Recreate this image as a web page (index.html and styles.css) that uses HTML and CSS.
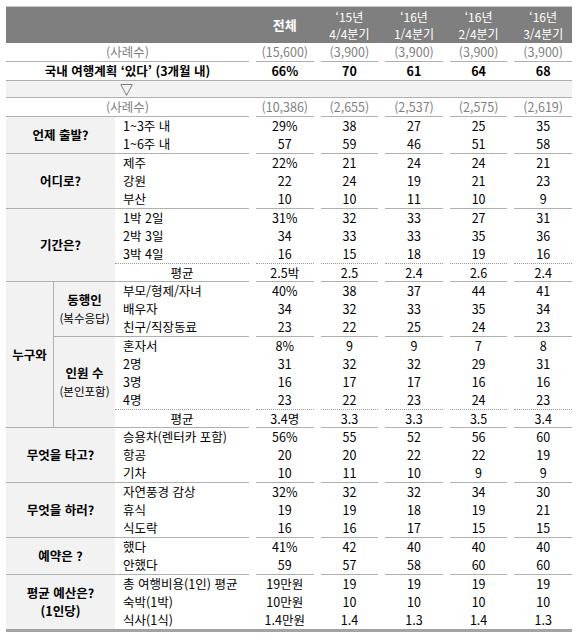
FILE: index.html
```html
<!DOCTYPE html>
<html lang="ko">
<head>
<meta charset="utf-8">
<link rel="stylesheet" href="styles.css">
</head>
<body>
<div class="tbl">
  <div class="hd lbl"></div>
  <div class="hd hv strong">전체</div>
  <div class="hd hv"><span>‘15년</span><span>4/4분기</span></div>
  <div class="hd hv"><span>‘16년</span><span>1/4분기</span></div>
  <div class="hd hv"><span>‘16년</span><span>2/4분기</span></div>
  <div class="hd hv"><span>‘16년</span><span>3/4분기</span></div>

  <div class="lbl grey e">(사례수)</div>
  <div class="v grey e">(15,600)</div>
  <div class="v grey e">(3,900)</div>
  <div class="v grey e">(3,900)</div>
  <div class="v grey e">(3,900)</div>
  <div class="v grey e">(3,900)</div>

  <div class="lbl strong">국내 여행계획 ‘있다’ (3개월 내)</div>
  <div class="v strong">66%</div>
  <div class="v strong">70</div>
  <div class="v strong">61</div>
  <div class="v strong">64</div>
  <div class="v strong">68</div>

  <div class="arrow">▽</div>

  <div class="lbl grey e">(사례수)</div>
  <div class="v grey e">(10,386)</div>
  <div class="v grey e">(2,655)</div>
  <div class="v grey e">(2,537)</div>
  <div class="v grey e">(2,575)</div>
  <div class="v grey e">(2,619)</div>

  <!-- 언제 출발? -->
  <div class="c r2 e">언제 출발?</div>
  <div class="i">1~3주 내</div>
  <div class="v">29%</div><div class="v">38</div><div class="v">27</div><div class="v">25</div><div class="v">35</div>
  <div class="i e">1~6주 내</div>
  <div class="v e">57</div><div class="v e">59</div><div class="v e">46</div><div class="v e">51</div><div class="v e">58</div>

  <!-- 어디로? -->
  <div class="c r3 e">어디로?</div>
  <div class="i">제주</div>
  <div class="v">22%</div><div class="v">21</div><div class="v">24</div><div class="v">24</div><div class="v">21</div>
  <div class="i">강원</div>
  <div class="v">22</div><div class="v">24</div><div class="v">19</div><div class="v">21</div><div class="v">23</div>
  <div class="i e">부산</div>
  <div class="v e">10</div><div class="v e">10</div><div class="v e">11</div><div class="v e">10</div><div class="v e">9</div>

  <!-- 기간은? -->
  <div class="c r4 e">기간은?</div>
  <div class="i">1박 2일</div>
  <div class="v">31%</div><div class="v">32</div><div class="v">33</div><div class="v">27</div><div class="v">31</div>
  <div class="i">2박 3일</div>
  <div class="v">34</div><div class="v">33</div><div class="v">33</div><div class="v">35</div><div class="v">36</div>
  <div class="i">3박 4일</div>
  <div class="v">16</div><div class="v">15</div><div class="v">18</div><div class="v">19</div><div class="v">16</div>
  <div class="i avg dt e">평균</div>
  <div class="v dt e">2.5박</div><div class="v dt e">2.5</div><div class="v dt e">2.4</div><div class="v dt e">2.6</div><div class="v dt e">2.4</div>

  <!-- 누구와 -->
  <div class="ca r8 e">누구와</div>
  <div class="s r3 e"><span>동행인</span><span class="small">(복수응답)</span></div>
  <div class="i">부모/형제/자녀</div>
  <div class="v">40%</div><div class="v">38</div><div class="v">37</div><div class="v">44</div><div class="v">41</div>
  <div class="i">배우자</div>
  <div class="v">34</div><div class="v">32</div><div class="v">33</div><div class="v">35</div><div class="v">34</div>
  <div class="i e">친구/직장동료</div>
  <div class="v e">23</div><div class="v e">22</div><div class="v e">25</div><div class="v e">24</div><div class="v e">23</div>

  <div class="s r5 e"><span>인원 수</span><span class="small">(본인포함)</span></div>
  <div class="i">혼자서</div>
  <div class="v">8%</div><div class="v">9</div><div class="v">9</div><div class="v">7</div><div class="v">8</div>
  <div class="i">2명</div>
  <div class="v">31</div><div class="v">32</div><div class="v">32</div><div class="v">29</div><div class="v">31</div>
  <div class="i">3명</div>
  <div class="v">16</div><div class="v">17</div><div class="v">17</div><div class="v">16</div><div class="v">16</div>
  <div class="i">4명</div>
  <div class="v">23</div><div class="v">22</div><div class="v">23</div><div class="v">24</div><div class="v">23</div>
  <div class="i avg dt e">평균</div>
  <div class="v dt e">3.4명</div><div class="v dt e">3.3</div><div class="v dt e">3.3</div><div class="v dt e">3.5</div><div class="v dt e">3.4</div>

  <!-- 무엇을 타고? -->
  <div class="c r3 e">무엇을 타고?</div>
  <div class="i">승용차(렌터카 포함)</div>
  <div class="v">56%</div><div class="v">55</div><div class="v">52</div><div class="v">56</div><div class="v">60</div>
  <div class="i">항공</div>
  <div class="v">20</div><div class="v">20</div><div class="v">22</div><div class="v">22</div><div class="v">19</div>
  <div class="i e">기차</div>
  <div class="v e">10</div><div class="v e">11</div><div class="v e">10</div><div class="v e">9</div><div class="v e">9</div>

  <!-- 무엇을 하러? -->
  <div class="c r3 e">무엇을 하러?</div>
  <div class="i">자연풍경 감상</div>
  <div class="v">32%</div><div class="v">32</div><div class="v">32</div><div class="v">34</div><div class="v">30</div>
  <div class="i">휴식</div>
  <div class="v">19</div><div class="v">19</div><div class="v">18</div><div class="v">19</div><div class="v">21</div>
  <div class="i e">식도락</div>
  <div class="v e">16</div><div class="v e">16</div><div class="v e">17</div><div class="v e">15</div><div class="v e">15</div>

  <!-- 예약은 ? -->
  <div class="c r2 e">예약은 ?</div>
  <div class="i">했다</div>
  <div class="v">41%</div><div class="v">42</div><div class="v">40</div><div class="v">40</div><div class="v">40</div>
  <div class="i e">안했다</div>
  <div class="v e">59</div><div class="v e">57</div><div class="v e">58</div><div class="v e">60</div><div class="v e">60</div>

  <!-- 평균 예산은? -->
  <div class="c r3"><span>평균 예산은?</span><span>(1인당)</span></div>
  <div class="i">총 여행비용(1인) 평균</div>
  <div class="v">19만원</div><div class="v">19</div><div class="v">19</div><div class="v">19</div><div class="v">19</div>
  <div class="i">숙박(1박)</div>
  <div class="v">10만원</div><div class="v">10</div><div class="v">10</div><div class="v">10</div><div class="v">10</div>
  <div class="i">식사(1식)</div>
  <div class="v">1.4만원</div><div class="v">1.4</div><div class="v">1.3</div><div class="v">1.4</div><div class="v">1.3</div>
</div>
</body>
</html>
```

FILE: styles.css
```css
html, body {
  margin: 0;
  padding: 0;
  background: #ffffff;
}

body {
  font-family: "Noto Sans CJK KR", "Noto Sans", sans-serif;
  font-size: 12.5px;
  color: #000000;
}

.tbl {
  margin: 6px 0 0 6px;
  width: 566px;
  display: grid;
  grid-template-columns: 47px 62px 134px repeat(5, 1fr);
  border-top: 1px solid #c6c6c6;
  border-bottom: 3px solid #a3a3a3;
}

.tbl > div {
  line-height: 18px;
  min-height: 18px;
  white-space: nowrap;
}

/* header */
.hd {
  background: #7f7f7f;
  color: #ffffff;
  height: 36px;
  font-size: 12px;
}
.hv {
  padding-left: 7px;
  text-align: center;
  display: flex;
  flex-direction: column;
  justify-content: center;
  font-size: 12.5px;
}
.hv span {
  display: block;
  line-height: 17.5px;
  font-size: 12px;
}
.hv.strong {
  font-size: 13px;
}

.lbl {
  grid-column: 1 / 4;
  text-align: center;
}

.strong {
  font-weight: 700;
}

.grey {
  color: #7f7f7f;
}

.v {
  margin-left: 7px;
  text-align: center;
  height: 18px;
}

.e {
  border-bottom: 1px solid #b0b0b0;
}

.arrow {
  grid-column: 1 / -1;
  background: #f2f2f2;
  border-top: 1px solid #b0b0b0;
  border-bottom: 1px solid #b0b0b0;
  height: 16px;
  line-height: 16px !important;
  min-height: 16px !important;
  padding-left: 114px;
  font-size: 13px;
  color: #222222;
}

/* category cells */
.c, .ca, .s {
  background: #f2f2f2;
  font-weight: 700;
  display: flex;
  flex-direction: column;
  align-items: center;
  justify-content: center;
  text-align: center;
}
.c {
  grid-column: 1 / 3;
}
.ca {
  grid-column: 1 / 2;
}
.s {
  grid-column: 2 / 3;
  border-left: 1px solid #b0b0b0;
}
.s .small {
  font-weight: 400;
  font-size: 11.5px;
}

.r2 { grid-row: span 2; }
.r3 { grid-row: span 3; }
.r4 { grid-row: span 4; }
.r5 { grid-row: span 5; }
.r8 { grid-row: span 8; }

.i {
  grid-column: 3 / 4;
  padding-left: 8px;
  height: 18px;
}
.i.avg {
  padding-left: 0;
  text-align: center;
}

.dt {
  border-top: 1px dotted #9a9a9a;
  height: 17px;
  line-height: 17px !important;
  min-height: 17px !important;
}
```
